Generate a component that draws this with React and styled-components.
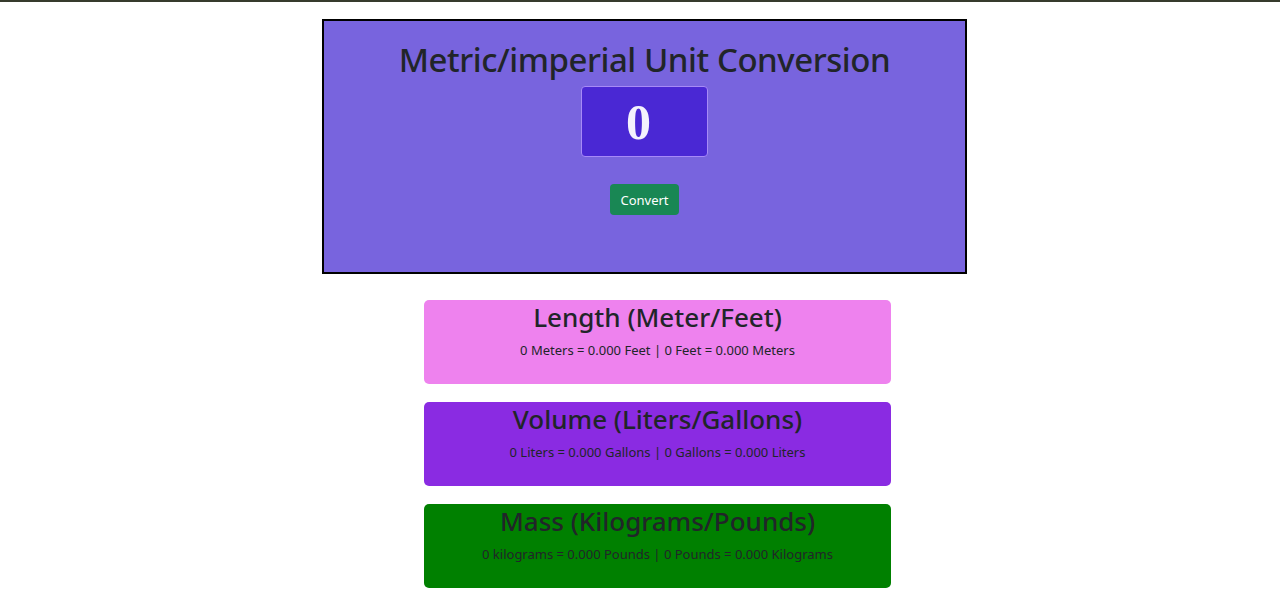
import React from "react";
import styled, { createGlobalStyle } from "styled-components";

const Global = createGlobalStyle`
  html, body { margin: 0; padding: 0; background: #ffffff; }
  body { font-family: "Noto Sans", "Open Sans", sans-serif; color: #212529; }
`;

const TopLine = styled.div`
  height: 2px;
  background: #363b2d;
`;

const Page = styled.div`
  display: flex;
  flex-direction: column;
  align-items: flex-start;
  padding-top: 17px;
`;

const Panel = styled.section`
  box-sizing: border-box;
  margin-left: 322px;
  width: 645px;
  height: 255px;
  border: 2px solid #000;
  background: #7864de;
  display: flex;
  flex-direction: column;
  align-items: center;
`;

const Title = styled.h1`
  margin: 18px 0 0;
  font-size: 33px;
  line-height: 42px;
  letter-spacing: -0.45px;
  font-weight: 500;
  color: #212529;
`;

const NumberBox = styled.input`
  box-sizing: border-box;
  margin-top: 5px;
  width: 127px;
  height: 71px;
  padding: 0 12px 0 0;
  background: #4a28d4;
  border: 1px solid #a78af7;
  border-radius: 4px;
  color: #f4f2fd;
  text-align: center;
  font-family: "Liberation Serif", "DejaVu Serif", serif;
  font-weight: 700;
  font-size: 50px;
  outline: none;
`;

const ConvertButton = styled.button`
  margin-top: 27px;
  width: 69px;
  height: 31px;
  background: #198754;
  border: none;
  border-radius: 4px;
  color: #fff;
  font-family: "Noto Sans", sans-serif;
  font-size: 13px;
  padding: 0;
`;

const Cards = styled.div`
  margin-left: 424px;
  margin-top: 26px;
  display: flex;
  flex-direction: column;
  gap: 18px;
`;

const Card = styled.div`
  box-sizing: border-box;
  width: 467px;
  height: 84px;
  border-radius: 5px;
  background: ${(p) => p.$bg};
  display: flex;
  flex-direction: column;
  align-items: center;
`;

const CardTitle = styled.h3`
  margin: 0;
  font-size: 26px;
  line-height: 34px;
  font-weight: 500;
  color: #212529;
`;

const CardText = styled.p`
  margin: 7px 0 0;
  font-size: 13px;
  line-height: 18px;
  color: #212529;
`;

const cards = [
  {
    bg: "#ee82ee",
    title: "Length (Meter/Feet)",
    text: "0 Meters = 0.000 Feet | 0 Feet = 0.000 Meters",
  },
  {
    bg: "#8a2be2",
    title: "Volume (Liters/Gallons)",
    text: "0 Liters = 0.000 Gallons | 0 Gallons = 0.000 Liters",
  },
  {
    bg: "#008000",
    title: "Mass (Kilograms/Pounds)",
    text: "0 kilograms = 0.000 Pounds | 0 Pounds = 0.000 Kilograms",
  },
];

export default function App() {
  return (
    <>
      <Global />
      <TopLine />
      <Page>
        <Panel>
          <Title>Metric/imperial Unit Conversion</Title>
          <NumberBox type="text" defaultValue="0" />
          <ConvertButton>Convert</ConvertButton>
        </Panel>
        <Cards>
          {cards.map((c) => (
            <Card key={c.title} $bg={c.bg}>
              <CardTitle>{c.title}</CardTitle>
              <CardText>{c.text}</CardText>
            </Card>
          ))}
        </Cards>
      </Page>
    </>
  );
}
